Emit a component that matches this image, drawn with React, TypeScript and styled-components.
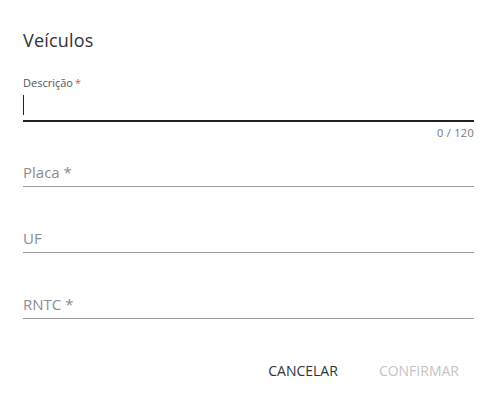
import React from "react";
import styled, { createGlobalStyle } from "styled-components";

const Global = createGlobalStyle`
  html, body { margin: 0; padding: 0; background: #ffffff; }
  body { font-family: "Open Sans", "Noto Sans", sans-serif; }
  * { box-sizing: border-box; }
`;

const Dialog = styled.div`
  width: 498px;
  height: 405px;
  background: #ffffff;
  padding: 26px 24px 0 23px;
  display: flex;
  flex-direction: column;
`;

const Title = styled.h2`
  margin: 0;
  font-size: 18px;
  line-height: 28px;
  font-weight: 400;
  color: #333333;
  letter-spacing: 0.2px;
`;

const FocusedField = styled.div`
  margin-top: 22px;
  display: flex;
  flex-direction: column;
`;

const Label = styled.label`
  font-size: 11px;
  line-height: 14px;
  color: #555555;
`;

const Required = styled.span`
  color: #e0532a;
  margin-left: 2px;
`;

const InputRow = styled.div`
  height: 32px;
  display: flex;
  align-items: center;
  border-bottom: 2px solid #222222;
`;

const Caret = styled.span`
  width: 1px;
  height: 20px;
  background: #222222;
`;

const Counter = styled.div`
  align-self: flex-end;
  font-size: 11px;
  line-height: 14px;
  margin-top: 4px;
  color: #777777;
  letter-spacing: 0.3px;
`;

const Field = styled.div<{ $gap: number }>`
  margin-top: ${(p) => p.$gap}px;
  height: 32px;
  display: flex;
  align-items: flex-end;
  border-bottom: 1px solid #9a9a9a;
`;

const Placeholder = styled.input`
  border: none;
  outline: none;
  width: 100%;
  padding: 0 0 4px 0;
  font-family: inherit;
  font-size: 15px;
  line-height: 20px;
  color: #333;
  background: transparent;
  &::placeholder { color: #8c8c8c; }
`;

const Actions = styled.div`
  margin-top: 42px;
  display: flex;
  justify-content: flex-end;
  gap: 25px;
  padding-right: 7px;
`;

const Button = styled.button<{ $disabled?: boolean }>`
  border: none;
  background: transparent;
  font-family: inherit;
  font-size: 14px;
  line-height: 20px;
  padding: 0 8px;
  color: ${(p) => (p.$disabled ? "#c4c4c4" : "#333333")};
  cursor: ${(p) => (p.$disabled ? "default" : "pointer")};
`;

export default function App() {
  return (
    <>
      <Global />
      <Dialog>
        <Title>Veículos</Title>
        <FocusedField>
          <Label>
            Descrição<Required>*</Required>
          </Label>
          <InputRow>
            <Caret />
          </InputRow>
          <Counter>0 / 120</Counter>
        </FocusedField>
        <Field $gap={15}>
          <Placeholder placeholder="Placa *" />
        </Field>
        <Field $gap={34}>
          <Placeholder placeholder="UF" />
        </Field>
        <Field $gap={34}>
          <Placeholder placeholder="RNTC *" />
        </Field>
        <Actions>
          <Button>CANCELAR</Button>
          <Button $disabled>CONFIRMAR</Button>
        </Actions>
      </Dialog>
    </>
  );
}
